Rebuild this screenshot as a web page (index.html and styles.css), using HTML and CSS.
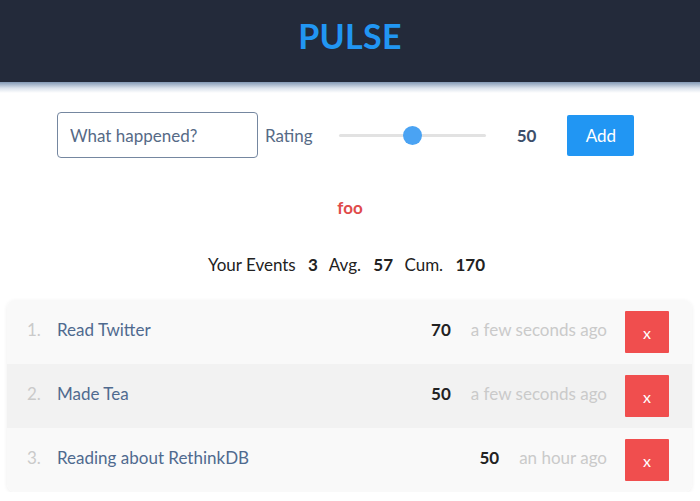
FILE: index.html
```html
<!DOCTYPE html>
<html>
<head>
<meta charset="utf-8">
<link rel="stylesheet" href="styles.css">
</head>
<body>
<header class="top"><h1 class="logo">PULSE</h1></header>
<div class="top-fade"></div>
<main class="main">
  <form class="entry">
    <input class="what" type="text" placeholder="What happened?">
    <span class="label">Rating</span>
    <input class="slider" type="range" min="0" max="100" value="50">
    <span class="value">50</span>
    <button class="add" type="button">Add</button>
  </form>
  <p class="error">foo</p>
  <p class="stats">Your Events <b>3</b> Avg. <b>57</b> Cum. <b>170</b></p>
  <ol class="events">
    <li class="event"><span class="num">1.</span><span class="title">Read Twitter</span><span class="score">70</span><span class="time">a few seconds ago</span><button class="del" type="button">x</button></li>
    <li class="event alt"><span class="num">2.</span><span class="title">Made Tea</span><span class="score">50</span><span class="time">a few seconds ago</span><button class="del" type="button">x</button></li>
    <li class="event"><span class="num">3.</span><span class="title">Reading about RethinkDB</span><span class="score">50</span><span class="time">an hour ago</span><button class="del" type="button">x</button></li>
  </ol>
</main>
</body>
</html>
```
FILE: styles.css
```css
* { box-sizing: border-box; }
body {
  margin: 0;
  background: #fff;
  font-family: Lato, "Open Sans", sans-serif;
  font-size: 17px;
  color: #222;
}
.top {
  height: 82px;
  background: #232a3a;
  display: flex;
  align-items: center;
  justify-content: center;
}
.logo {
  margin: 0;
  font-size: 34px;
  font-weight: 700;
  color: #2196f3;
  letter-spacing: 0.3px;
  padding-bottom: 12px;
}
.top-fade {
  height: 11px;
  background: linear-gradient(#8399b5, #d9e1eb 55%, #fff);
}
.main { padding-top: 19px; }
.entry {
  display: flex;
  align-items: center;
  margin: 0 0 0 57px;
  height: 46px;
}
.what {
  width: 201px;
  height: 46px;
  border: 1px solid #7587a0;
  border-radius: 4px;
  padding: 0 12px;
  font: inherit;
  font-size: 17px;
  color: #4f6a8f;
  outline: none;
}
.what::placeholder { color: #566a86; }
.label {
  margin-left: 7px;
  color: #566a86;
}
.slider {
  -webkit-appearance: none;
  appearance: none;
  margin: 0 0 0 26px;
  width: 147px;
  height: 20px;
  background: transparent;
}
.slider::-webkit-slider-runnable-track {
  height: 3px;
  background: #e2e2e2;
  border-radius: 2px;
}
.slider::-webkit-slider-thumb {
  -webkit-appearance: none;
  width: 19px;
  height: 19px;
  border-radius: 50%;
  background: #4aa3f3;
  border: none;
  margin-top: -8px;
}
.value {
  margin-left: 31px;
  font-weight: 700;
  color: #3d4f6b;
}
.add {
  margin-left: 31px;
  width: 67px;
  height: 41px;
  border: none;
  border-radius: 2px;
  background: #2196f3;
  color: #fff;
  font: inherit;
  font-size: 17px;
}
.error {
  margin: 40px 0 0;
  text-align: center;
  font-weight: 700;
  color: #e04b4b;
  line-height: 20px;
}
.stats {
  margin: 37px 0 0;
  text-align: center;
  line-height: 20px;
}
.stats b { margin: 0 7px 0 8px; }
.events {
  list-style: none;
  margin: 25px 8px 0 7px;
  padding: 0;
  border-radius: 8px;
  overflow: hidden;
  box-shadow: 0 1px 4px rgba(0,0,0,0.07);
}
.event {
  display: flex;
  align-items: center;
  height: 64px;
  padding: 0 23px 0 20px;
  background: #f9f9f9;
}
.event.alt { background: #f2f2f2; }
.num {
  width: 30px;
  color: #cacaca;
  padding-bottom: 6px;
}
.title {
  flex: 1;
  color: #4f6a8f;
  padding-bottom: 6px;
}
.score {
  font-weight: 700;
  color: #222;
  padding-bottom: 6px;
}
.time {
  margin-left: 20px;
  color: #cacaca;
  padding-bottom: 6px;
}
.del {
  margin-left: 18px;
  width: 44px;
  height: 42px;
  border: none;
  border-radius: 1px;
  background: #f04e4e;
  color: #fff;
  font: inherit;
  font-size: 16px;
}
```
